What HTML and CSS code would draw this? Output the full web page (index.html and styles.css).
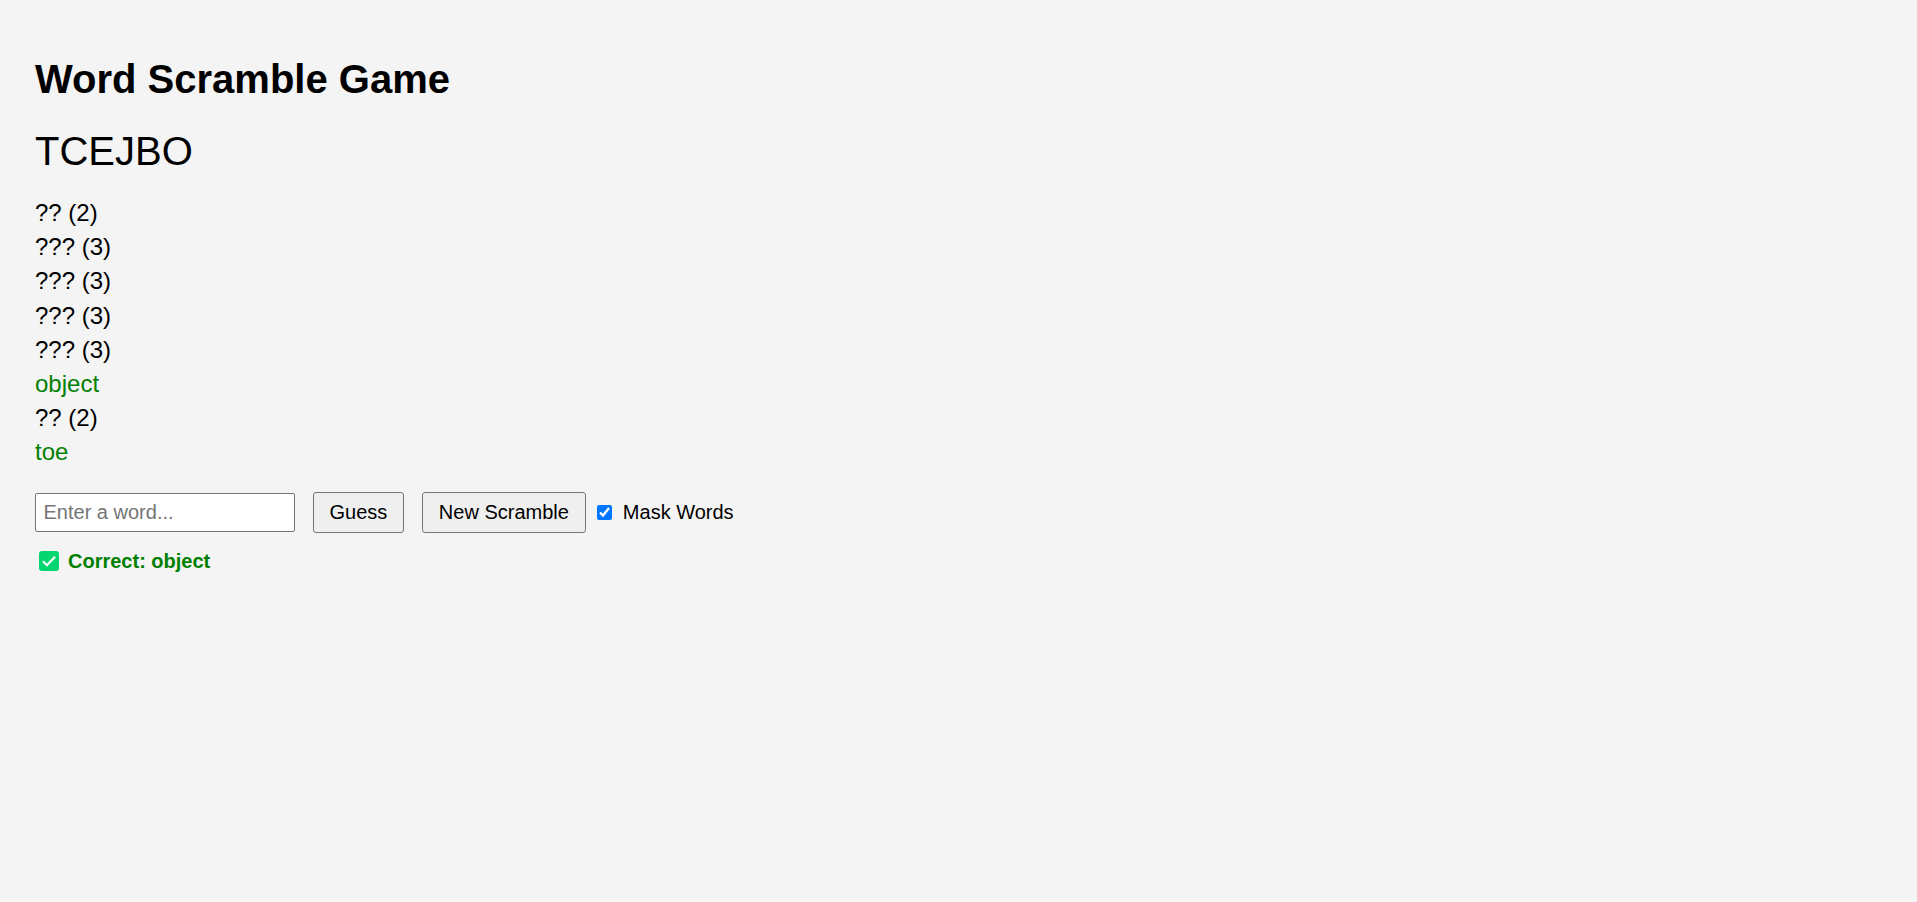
FILE: index.html
```html
<!DOCTYPE html>
<html>
<head>
<meta charset="utf-8">
<title>Word Scramble Game</title>
<link rel="stylesheet" href="styles.css">
</head>
<body>
	<h1>Word Scramble Game</h1>
	<div class="scramble">TCEJBO</div>
	<ul class="words">
		<li>?? (2)</li>
		<li>??? (3)</li>
		<li>??? (3)</li>
		<li>??? (3)</li>
		<li>??? (3)</li>
		<li class="found">object</li>
		<li>?? (2)</li>
		<li class="found">toe</li>
	</ul>
	<div class="controls">
		<input class="guess" type="text" placeholder="Enter a word...">
		<button class="btn btn-guess" type="button">Guess</button>
		<button class="btn" type="button">New Scramble</button>
		<label class="mask"><input type="checkbox" checked>Mask Words</label>
	</div>
	<div class="message">
		<svg class="tick" viewBox="0 0 20 20" width="20" height="20">
			<rect width="20" height="20" rx="3" fill="#06d66f"/>
			<path d="M4 10.2l4 4 8-8.4" fill="none" stroke="#fff" stroke-width="2.2"/>
		</svg>
		<span>Correct: object</span>
	</div>
</body>
</html>
```

FILE: styles.css
```css
*{
	margin:0;
	padding:0;
	list-style:none;
}
body{
	padding:35px;
	background:#f4f4f4;
	font-family:"Liberation Sans",Arial,sans-serif;
	color:#000;
}
h1{
	font-size:40px;
	line-height:46px;
	margin-top:21px;
}
.scramble{
	font-size:40px;
	line-height:46px;
	margin-top:26px;
}
.words{
	margin-top:22px;
	font-size:24px;
	line-height:34.2px;
}
.found{
	color:green;
}
.controls{
	display:flex;
	align-items:center;
	gap:18px;
	margin-top:22px;
}
.guess{
	width:260px;
	height:39px;
	padding:0 7.5px;
	box-sizing:border-box;
	border:1px solid #767676;
	border-radius:2px;
	font-family:inherit;
	font-size:20px;
}
.btn{
	height:41px;
	padding:0 16px;
	border:1px solid #767676;
	border-radius:3px;
	background:#efefef;
	font-family:inherit;
	font-size:20px;
	color:#000;
}
.btn-guess{
	padding:0 15.5px;
}
.mask{
	display:flex;
	align-items:center;
	margin-left:-7px;
	font-size:20px;
}
.mask input{
	width:15px;
	height:15px;
	margin:0 11px 0 0;
	accent-color:#0075ff;
}
.message{
	display:flex;
	align-items:center;
	gap:9px;
	margin-top:17px;
	padding-left:4px;
	font-size:20px;
	font-weight:bold;
	color:green;
}
.tick{
	margin-bottom:1px;
}
```
